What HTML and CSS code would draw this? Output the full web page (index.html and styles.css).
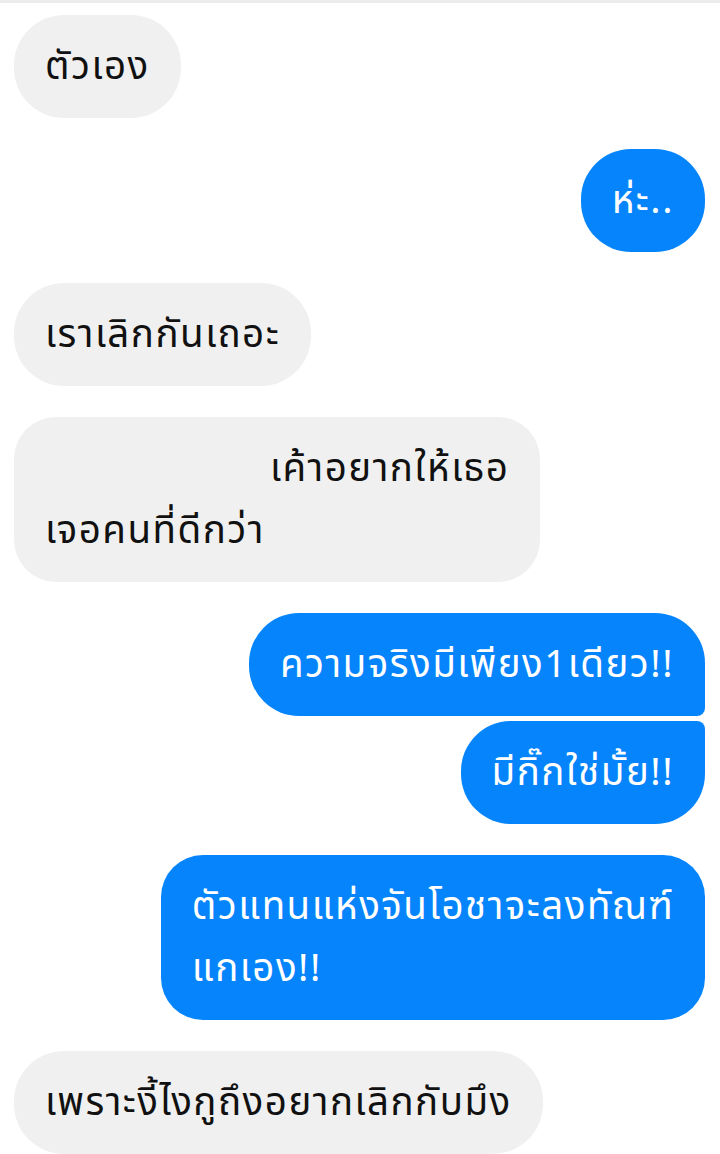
FILE: index.html
```html
<!DOCTYPE html>
<html>
<head>
    <title>Chat</title>
    <link rel="stylesheet" href="styles.css">
</head>
<body>
    <div class="chat">
        <div class="row">
            <div class="bubble them">ตัวเอง</div>
        </div>
        <div class="row me">
            <div class="bubble me">ห่ะ..</div>
        </div>
        <div class="row">
            <div class="bubble them">เราเลิกกันเถอะ</div>
        </div>
        <div class="row">
            <div class="bubble them two-line indent">เค้าอยากให้เธอ<br>เจอคนที่ดีกว่า</div>
        </div>
        <div class="group">
            <div class="row me">
                <div class="bubble me first">ความจริงมีเพียง1เดียว!!</div>
            </div>
            <div class="row me">
                <div class="bubble me last">มีกิ๊กใช่มั้ย!!</div>
            </div>
        </div>
        <div class="row me">
            <div class="bubble me two-line">ตัวแทนแห่งจันโอชาจะลงทัณฑ์<br>แกเอง!!</div>
        </div>
        <div class="row">
            <div class="bubble them">เพราะงี้ไงกูถึงอยากเลิกกับมึง</div>
        </div>
    </div>
</body>
</html>
```

FILE: styles.css
```css
body {
    margin: 0;
    background: #ffffff;
    font-family: "Noto Sans Thai", "Noto Sans Thai UI", "Noto Sans", sans-serif;
}

/* thin grey strip along the top edge */
.chat {
    border-top: 3px solid #ececec;
    padding: 12px 15px 0 14px;
    display: flex;
    flex-direction: column;
    gap: 31px;
    height: 1154px;
    box-sizing: border-box;
    overflow: hidden;
}

.row {
    display: flex;
}

.row.me {
    justify-content: flex-end;
}

.group {
    display: flex;
    flex-direction: column;
    gap: 5px;
}

.bubble {
    font-size: 38.5px;
    letter-spacing: 1.5px;
    line-height: 62px;
    padding: 21px 31px 20px 31px;
    border-radius: 50px;
    white-space: nowrap;
}

.bubble.them {
    background: #f0f0f0;
    color: #111111;
}

.bubble.me {
    background: #0684fc;
    color: #ffffff;
}

.bubble.two-line {
    border-radius: 42px;
}

.bubble.indent {
    text-indent: 225px;
}

.bubble.first {
    border-bottom-right-radius: 8px;
}

.bubble.last {
    border-top-right-radius: 8px;
}
```
